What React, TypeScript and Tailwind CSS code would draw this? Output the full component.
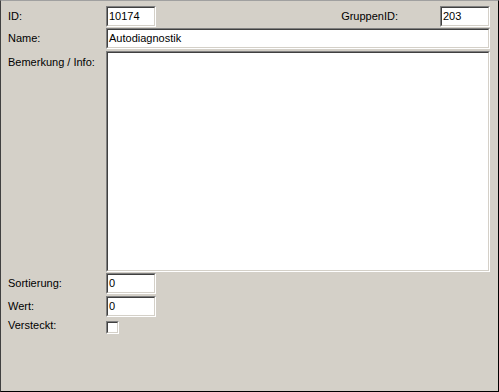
import React from "react";

const font = { fontFamily: '"Liberation Sans", Arial, sans-serif' };

// klassischer "eingelassener" Rahmen (Win9x-Stil)
function Sunken({ className = "", children }: { className?: string; children?: React.ReactNode }) {
  return (
    <div className={`border border-t-[#808080] border-l-[#808080] border-r-white border-b-white ${className}`}>
      <div className="h-full w-full border border-t-[#404040] border-l-[#404040] border-r-[#d4d0c8] border-b-[#d4d0c8] bg-white">
        {children}
      </div>
    </div>
  );
}

function Field({ value, className = "" }: { value: string; className?: string }) {
  return (
    <Sunken className={`h-[21px] ${className}`}>
      <div className="pl-[1px] text-[11px] leading-[17px] text-black">{value}</div>
    </Sunken>
  );
}

function Label({ children, className = "" }: { children: React.ReactNode; className?: string }) {
  return <div className={`text-[11px] leading-[13px] text-black ${className}`}>{children}</div>;
}

export default function App() {
  return (
    <div
      style={font}
      className="w-[499px] h-[392px] bg-[#d4d0c8] border border-t-[#a0a0a0] border-l-[#404040] border-r-black border-b-black flex flex-col"
    >
      {/* ID / GruppenID */}
      <div className="mt-[5px] flex items-center pr-[8px]">
        <Label className="w-[105px] pl-[7px]">ID:</Label>
        <Field value="10174" className="w-[50px]" />
        <Label className="ml-auto mr-[42px]">GruppenID:</Label>
        <Field value="203" className="w-[50px]" />
      </div>

      {/* Name */}
      <div className="mt-[1px] flex items-center pr-[8px]">
        <Label className="w-[105px] pl-[7px]">Name:</Label>
        <Field value="Autodiagnostik" className="flex-1" />
      </div>

      {/* Bemerkung */}
      <div className="mt-[2px] flex items-start pr-[8px]">
        <Label className="w-[105px] pl-[7px] pt-[5px]">Bemerkung / Info:</Label>
        <Sunken className="flex-1 h-[221px]" />
      </div>

      {/* Sortierung */}
      <div className="mt-[1px] flex items-center">
        <Label className="w-[105px] pl-[7px]">Sortierung:</Label>
        <Field value="0" className="w-[50px]" />
      </div>

      <div className="mt-[2px] flex items-center">
        <Label className="w-[105px] pl-[7px]">Wert:</Label>
        <Field value="0" className="w-[50px]" />
      </div>

      <div className="mt-[2px] flex items-start">
        <Label className="w-[105px] pl-[7px]">Versteckt:</Label>
        <Sunken className="mt-[2px] w-[13px] h-[13px]" />
      </div>
    </div>
  );
}
